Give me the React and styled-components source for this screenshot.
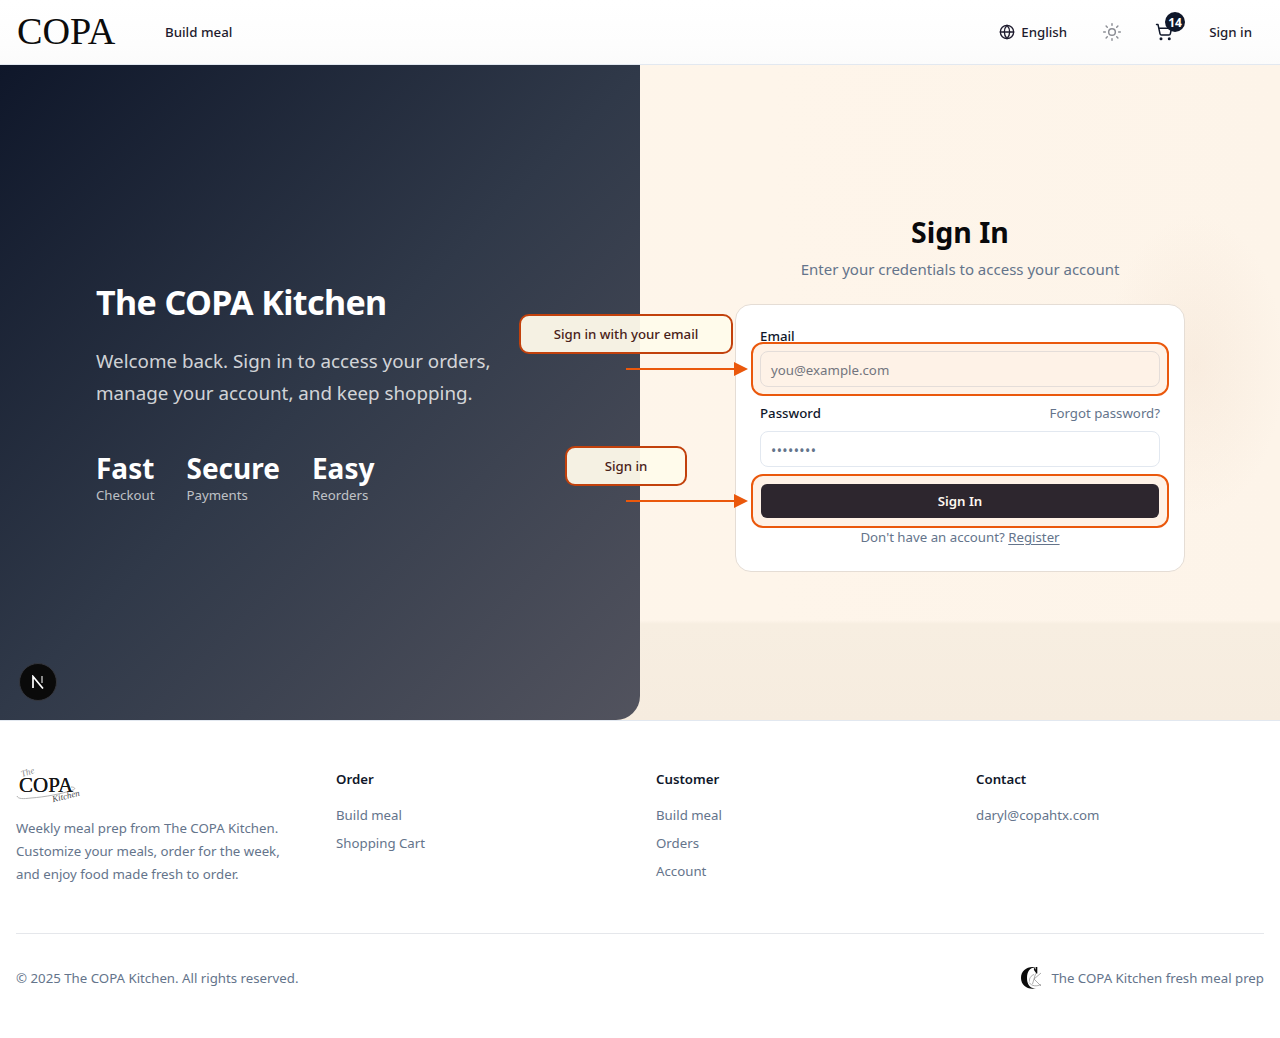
import React from 'react';
import styled, { createGlobalStyle } from 'styled-components';
import { Globe, Sun, ShoppingCart } from 'lucide-react';

const GlobalStyle = createGlobalStyle`
  html, body { margin: 0; padding: 0; background: #fff; }
  * { box-sizing: border-box; }
  body { font-family: "Noto Sans", "Open Sans", sans-serif; color: #0f172a; }
`;

const Page = styled.div`
  width: 1280px;
  height: 1038px;
  overflow: hidden;
  display: flex;
  flex-direction: column;
`;

const Header = styled.header`
  height: 65px;
  flex: none;
  display: flex;
  align-items: center;
  padding: 0 28px 0 17px;
  border-bottom: 1px solid #e2e8f0;
  background: linear-gradient(180deg, #ffffff 0%, #fdfdfd 70%, #fbfbfb 100%);
`;

const Logo = styled.div`
  font-family: "Liberation Serif", serif;
  font-size: 38.2px;
  line-height: 1;
  color: #0c0c0c;
  width: 148px;
  padding-bottom: 2px;
`;

const NavLink = styled.a`
  font-size: 13.3px;
  font-weight: 500;
  color: #1e1b2e;
`;

const NavRight = styled.div`
  margin-left: auto;
  display: flex;
  align-items: center;
`;

const LangButton = styled.div`
  display: flex;
  align-items: center;
  gap: 6px;
  font-size: 13.25px;
  font-weight: 500;
  color: #1e1b2e;
  margin-right: 35px;
`;

const ThemeButton = styled.div`
  display: flex;
  color: #8b8d94;
  margin-right: 33px;
`;

const CartButton = styled.div`
  position: relative;
  display: flex;
  color: #0f172a;
  margin-right: 36px;
`;

const CartBadge = styled.span`
  position: absolute;
  top: -11px;
  left: 10px;
  width: 20px;
  height: 20px;
  border-radius: 50%;
  background: #0f172a;
  color: #fff;
  font-size: 12px;
  font-weight: 700;
  display: flex;
  align-items: center;
  justify-content: center;
`;

const Hero = styled.section`
  position: relative;
  height: 655px;
  flex: none;
  display: grid;
  grid-template-columns: 640px 640px;
  background:
    radial-gradient(ellipse 90px 150px at 1195px 300px, rgba(240, 222, 205, 0.35), transparent),
    linear-gradient(180deg, transparent 0, transparent 555px, #f7eee1 559px, #f6ecdf 100%),
    linear-gradient(90deg, #fef6ea 0%, #fef5ea 60%, #fdf4e9 100%);
`;

const LeftPanel = styled.div`
  background: linear-gradient(135deg, #0f172a 0%, #303949 50%, #52535e 100%);
  border-bottom-right-radius: 24px;
  padding: 217px 0 0 96px;
  color: #fff;
`;

const HeroTitle = styled.h1`
  margin: 0;
  font-size: 34px;
  line-height: 40px;
  font-weight: 700;
  letter-spacing: -0.6px;
`;

const HeroText = styled.p`
  margin: 23px 0 0;
  font-size: 18.8px;
  line-height: 32px;
  width: 448px;
  color: rgba(255, 255, 255, 0.8);
`;

const Stats = styled.div`
  display: flex;
  gap: 32px;
  margin-top: 42px;
`;

const StatValue = styled.div`
  font-size: 28px;
  line-height: 34px;
  font-weight: 700;
`;

const StatLabel = styled.div`
  font-size: 13.25px;
  line-height: 20px;
  color: rgba(255, 255, 255, 0.7);
`;

const DevBadge = styled.div`
  position: absolute;
  left: 19px;
  bottom: 19px;
  width: 38px;
  height: 38px;
  border-radius: 50%;
  background: #0a0a0a;
  border: 1px solid #33353c;
  display: flex;
  align-items: center;
  justify-content: center;
`;

const RightPanel = styled.div`
  display: flex;
  flex-direction: column;
  align-items: center;
  padding-top: 147px;
`;

const FormTitle = styled.h2`
  margin: 0;
  font-size: 28.5px;
  line-height: 40px;
  font-weight: 700;
  color: #09090b;
`;

const FormSub = styled.p`
  margin: 5px 0 0;
  font-size: 15px;
  line-height: 24px;
  color: #64748b;
`;

const Card = styled.div`
  margin-top: 23px;
  width: 450px;
  height: 268px;
  background: #fff;
  border: 1px solid #e5ddd5;
  border-radius: 16px;
  padding: 21px 24px;
`;

const Field = styled.div`
  position: relative;
  margin-bottom: ${(p) => p.$gap}px;
`;

const LabelRow = styled.div`
  display: flex;
  justify-content: space-between;
  align-items: center;
  height: 20px;
  margin-bottom: ${(p) => p.$gap}px;
`;

const Label = styled.label`
  font-size: 13.25px;
  font-weight: 500;
  color: #0f172a;
`;

const Forgot = styled.a`
  font-size: 13.25px;
  color: #64748b;
`;

const Input = styled.div`
  position: relative;
  height: 36px;
  border: 1px solid #e2e8f0;
  border-radius: 8px;
  background: #fff;
  padding: 1px 10px 0;
  display: flex;
  align-items: center;
  font-size: 13.25px;
  color: #64748b;
`;

const Dots = styled.span`
  font-size: 14px;
  letter-spacing: 0.4px;
  margin-top: 2px;
`;

const SubmitButton = styled.div`
  position: relative;
  height: 34px;
  margin: 0 1px;
  border-radius: 6px;
  background: #2d262e;
  color: #fdf8f0;
  font-size: 13.25px;
  font-weight: 600;
  display: flex;
  align-items: center;
  justify-content: center;
`;

const Highlight = styled.div`
  position: absolute;
  left: -9px;
  right: -9px;
  top: ${(p) => p.$inset}px;
  bottom: ${(p) => p.$inset}px;
  border: 2px solid #ea580c;
  border-radius: 12px;
  background: rgba(245, 130, 20, 0.1);
  pointer-events: none;
`;

const RegisterLine = styled.p`
  margin: 0;
  text-align: center;
  font-size: 13.25px;
  line-height: 20px;
  color: #64748b;
  & u { text-underline-offset: 2px; }
`;

const Callout = styled.div`
  position: absolute;
  left: ${(p) => p.$left}px;
  top: ${(p) => p.$top}px;
  width: ${(p) => p.$width}px;
  height: 40px;
  display: flex;
  align-items: center;
  justify-content: center;
  background: rgba(255, 251, 235, 0.95);
  border: 2px solid #c2410c;
  border-radius: 10px;
  font-size: 13.25px;
  font-weight: 500;
  color: #4a2118;
`;

const ArrowSvg = styled.svg`
  position: absolute;
  left: 626px;
  top: ${(p) => p.$top}px;
`;

const Footer = styled.footer`
  flex: 1;
  border-top: 1px solid #e2e8f0;
  padding: 47px 16px 0;
  background: #fff;
`;

const FooterGrid = styled.div`
  display: grid;
  grid-template-columns: repeat(4, 288px);
  gap: 32px;
  height: 166px;
  border-bottom: 1px solid #e5e7eb;
`;

const FooterLogoMark = styled.div`
  position: relative;
  width: 62px;
  height: 35px;
`;

const FooterLogoWord = styled.span`
  position: absolute;
  left: 3px;
  top: 5px;
  font-family: "Liberation Serif", serif;
  font-size: 21px;
  line-height: 24px;
  color: #161616;
  text-shadow: 0 0 0.5px #161616;
`;

const ScriptWord = styled.span`
  position: absolute;
  left: ${(p) => p.$left}px;
  top: ${(p) => p.$top}px;
  font-family: "Liberation Serif", serif;
  font-style: italic;
  font-size: ${(p) => p.$size}px;
  line-height: 1;
  color: ${(p) => p.$color};
  transform: rotate(${(p) => p.$angle}deg);
`;

const FlourishSvg = styled.svg`
  position: absolute;
  left: 0;
  top: 0;
`;

const FooterText = styled.p`
  margin: 14px 0 0;
  font-size: 13.25px;
  line-height: 23px;
  color: #64748b;
`;

const ColumnTitle = styled.h4`
  margin: 0 0 16px;
  font-size: 13.25px;
  line-height: 20px;
  font-weight: 600;
  padding-top: 1px;
  color: #0f172a;
`;

const ColumnLink = styled.a`
  display: block;
  font-size: 13.25px;
  line-height: 20px;
  margin-bottom: 8px;
  color: #64748b;
`;

const FooterBottom = styled.div`
  display: flex;
  justify-content: space-between;
  align-items: center;
  height: 88px;
  font-size: 13.25px;
  color: #64748b;
`;

const Brand = styled.div`
  display: flex;
  align-items: center;
  gap: 8px;
`;

const columns = [
  { title: 'Order', links: ['Build meal', 'Shopping Cart'] },
  { title: 'Customer', links: ['Build meal', 'Orders', 'Account'] },
  { title: 'Contact', links: ['daryl@copahtx.com'] },
];

const stats = [
  { value: 'Fast', label: 'Checkout' },
  { value: 'Secure', label: 'Payments' },
  { value: 'Easy', label: 'Reorders' },
];

const Arrow = ({ top }) => (
  <ArrowSvg $top={top} width="124" height="16" viewBox="0 0 124 16">
    <path d="M0 8h110" stroke="#ea580c" strokeWidth="2" />
    <path d="M108 1l14 7-14 7z" fill="#ea580c" />
  </ArrowSvg>
);

const FooterLogo = () => (
  <FooterLogoMark>
    <FlourishSvg width="62" height="35" viewBox="0 0 62 35" fill="none">
      <path d="M1 28c1 3 6 3 14 2 14-1 30-4 42-8 3-1 2-3-2-3" stroke="#a0a0a0" strokeWidth="0.8" />
    </FlourishSvg>
    <ScriptWord $left={5} $top={0} $size={9} $color="#8a8a8a" $angle={-18}>The</ScriptWord>
    <FooterLogoWord>COPA</FooterLogoWord>
    <ScriptWord $left={36} $top={24} $size={9} $color="#4a4a4a" $angle={-14}>Kitchen</ScriptWord>
  </FooterLogoMark>
);

const BrandMark = () => (
  <svg width="22" height="24" viewBox="0 0 22 24" fill="none">
    <path d="M15 1.6C7.5-.4 0 4 0 12s7.5 12.2 15 10.2c-6 .8-9-3.8-9-10.2S9 1 15 1.6z" fill="#0b0b0b" />
    <path d="M15.5 1v6.5M14 2.4c-1 .6 0 2 1 3" stroke="#0b0b0b" strokeWidth="1.6" />
    <path d="M13 8.5c-3 1-5 4-4.5 7M14.5 8l-3 10M20 7l-7 6 7 7M8 16.5c3 4 8 4 12 2" stroke="#8a8a8a" strokeWidth="0.7" />
  </svg>
);

export default function App() {
  return (
    <Page>
      <GlobalStyle />
      <Header>
        <Logo>COPA</Logo>
        <NavLink>Build meal</NavLink>
        <NavRight>
          <LangButton>
            <Globe size={16} strokeWidth={2} />
            English
          </LangButton>
          <ThemeButton>
            <Sun size={20} strokeWidth={1.75} />
          </ThemeButton>
          <CartButton>
            <ShoppingCart size={18} strokeWidth={2} />
            <CartBadge>14</CartBadge>
          </CartButton>
          <NavLink>Sign in</NavLink>
        </NavRight>
      </Header>

      <Hero>
        <LeftPanel>
          <HeroTitle>The COPA Kitchen</HeroTitle>
          <HeroText>
            Welcome back. Sign in to access your orders, manage your account, and keep shopping.
          </HeroText>
          <Stats>
            {stats.map((s) => (
              <div key={s.value}>
                <StatValue>{s.value}</StatValue>
                <StatLabel>{s.label}</StatLabel>
              </div>
            ))}
          </Stats>
        </LeftPanel>

        <RightPanel>
          <FormTitle>Sign In</FormTitle>
          <FormSub>Enter your credentials to access your account</FormSub>
          <Card>
            <LabelRow $gap={5}>
              <Label>Email</Label>
            </LabelRow>
            <Field $gap={16}>
              <Input>you@example.com</Input>
              <Highlight $inset={-9} />
            </Field>
            <LabelRow $gap={8}>
              <Label>Password</Label>
              <Forgot>Forgot password?</Forgot>
            </LabelRow>
            <Field $gap={17}>
              <Input>
                <Dots>••••••••</Dots>
              </Input>
            </Field>
            <Field $gap={9}>
              <Highlight $inset={-10} />
              <SubmitButton>Sign In</SubmitButton>
            </Field>
            <RegisterLine>
              Don't have an account? <u>Register</u>
            </RegisterLine>
          </Card>
        </RightPanel>

        <Callout $left={519} $top={249} $width={214}>Sign in with your email</Callout>
        <Arrow top={296} />
        <Callout $left={565} $top={381} $width={122}>Sign in</Callout>
        <Arrow top={428} />

        <DevBadge>
          <svg width="14" height="14" viewBox="0 0 14 14" fill="none">
            <path d="M2 13V1.5L12 13.5" stroke="#fff" strokeWidth="1.7" />
            <path d="M11 1v7" stroke="#b5b5b5" strokeWidth="1.5" />
          </svg>
        </DevBadge>
      </Hero>

      <Footer>
        <FooterGrid>
          <div>
            <FooterLogo />
            <FooterText>
              Weekly meal prep from The COPA Kitchen.
              <br />
              Customize your meals, order for the week,
              <br />
              and enjoy food made fresh to order.
            </FooterText>
          </div>
          {columns.map((c) => (
            <div key={c.title}>
              <ColumnTitle>{c.title}</ColumnTitle>
              {c.links.map((l) => (
                <ColumnLink key={l}>{l}</ColumnLink>
              ))}
            </div>
          ))}
        </FooterGrid>
        <FooterBottom>
          <span>© 2025 The COPA Kitchen. All rights reserved.</span>
          <Brand>
            <BrandMark />
            The COPA Kitchen fresh meal prep
          </Brand>
        </FooterBottom>
      </Footer>
    </Page>
  );
}
